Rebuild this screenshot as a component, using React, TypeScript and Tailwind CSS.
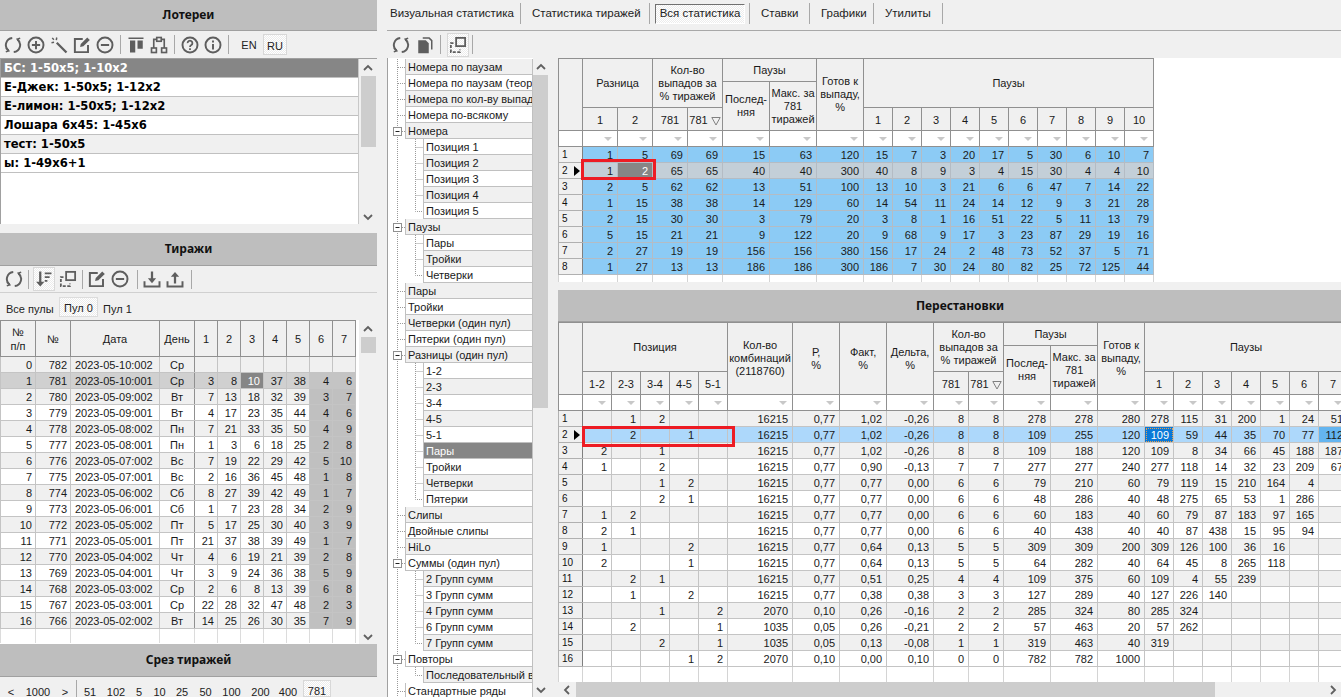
import React from "react";

const checker = "bg-[repeating-conic-gradient(#ffffff_0_25%,#ececec_0_50%)] bg-[length:2px_2px]";

const Ic = ({ children, size = 18 }: { children: React.ReactNode; size?: number }) => (
	<svg width={size} height={size} viewBox="0 0 24 24" fill="none" stroke="#5e5e5e" strokeWidth={2.6} className="shrink-0">
		{children}
	</svg>
);

const IconRefresh = () => (
	<Ic>
		<path d="M11 2.6A9.5 9.5 0 0 0 6 19.4" />
		<path d="M3 15.6L6.4 19.8L2.4 21" strokeWidth={2} />
		<path d="M13 21.4A9.5 9.5 0 0 0 18 4.6" />
		<path d="M21 8.4L17.6 4.2L21.6 3" strokeWidth={2} />
	</Ic>
);
const IconPlus = () => (
	<Ic>
		<circle cx="12" cy="12" r="10" />
		<path d="M6.5 12h11M12 6.5v11" />
	</Ic>
);
const IconMinus = () => (
	<Ic>
		<circle cx="12" cy="12" r="10" />
		<path d="M6.5 12h11" />
	</Ic>
);
const IconWand = () => (
	<Ic>
		<path d="M9 9L22 22" strokeWidth={3} />
		<path d="M3 2.5L5.2 5M9 2l-.6 3.4M2 9l3.4-.6" strokeWidth={2} />
	</Ic>
);
const IconEdit = () => (
	<Ic>
		<path d="M20 12v9.5H2.5V4H13" />
		<path d="M9.5 14.5l.8-4L19 2l3.4 3.4-8.6 8.4z" fill="#5e5e5e" stroke="none" />
	</Ic>
);
const IconColumns = () => (
	<Ic>
		<path d="M2 3h20" strokeWidth={2} />
		<path d="M4 6h7v16H4z" fill="#5e5e5e" stroke="none" />
		<path d="M14 6h7v11h-7z" fill="#5e5e5e" stroke="none" />
	</Ic>
);
const IconTree = () => (
	<Ic>
		<rect x="9" y="2" width="6" height="5" strokeWidth={2.2} />
		<rect x="2" y="16" width="6.5" height="6" strokeWidth={2.2} />
		<rect x="15.5" y="16" width="6.5" height="6" strokeWidth={2.2} />
		<path d="M9 4.5H5v11.5M15 4.5h4v11.5" strokeWidth={2.2} />
	</Ic>
);
const IconHelp = () => (
	<Ic>
		<circle cx="12" cy="12" r="10" />
		<path d="M8.8 9.5a3.2 3.2 0 1 1 5 2.6c-1.2.8-1.8 1.4-1.8 2.6" strokeWidth={2.4} />
		<path d="M12 16.4v2.4" strokeWidth={2.4} />
	</Ic>
);
const IconInfo = () => (
	<Ic>
		<circle cx="12" cy="12" r="10" />
		<path d="M12 10.5v7.5M12 6v2.6" />
	</Ic>
);
const IconCopyDoc = () => (
	<Ic>
		<path d="M9 1.5h9l4 4V18h-2V6.5L17 3.5H9z" fill="#5e5e5e" stroke="none" />
		<path d="M3 5.5h10l4 4V23H3z" fill="#5e5e5e" stroke="none" />
	</Ic>
);
const IconWindows = () => (
	<Ic>
		<rect x="9.5" y="2.5" width="12" height="11" strokeWidth={2.4} />
		<path d="M6 9.5H2.5v12h12V18" strokeWidth={2.4} strokeDasharray="4 2" />
	</Ic>
);
const IconSort = () => (
	<Ic>
		<path d="M7 2v16" strokeWidth={3} />
		<path d="M1.5 15.5L7 22l5.5-6.5z" fill="#5e5e5e" stroke="none" />
		<path d="M13 4.5h9M13 9.5h6.5M13 14.5h3.5" strokeWidth={2.6} />
	</Ic>
);
const IconDown = () => (
	<Ic>
		<path d="M2 15v7h20v-7" />
		<path d="M12 2v12" strokeWidth={3} />
		<path d="M6.5 11L12 17.5 17.5 11z" fill="#5e5e5e" stroke="none" />
	</Ic>
);
const IconUp = () => (
	<Ic>
		<path d="M2 15v7h20v-7" />
		<path d="M12 18V7" strokeWidth={3} />
		<path d="M6.5 9L12 2.5 17.5 9z" fill="#5e5e5e" stroke="none" />
	</Ic>
);

const Sep = ({ h = "h-[19px]" }: { h?: string }) => <div className={`w-px ${h} bg-[#a8a8a8] shrink-0`} />;

const Title = ({ text, h, extra = "" }: { text: string; h: string; extra?: string }) => (
	<div className={`${h} ${extra} shrink-0 bg-[#bebebe] border-b border-[#a0a0a0] flex items-center justify-center font-['Noto_Sans',sans-serif] font-bold text-[12px] text-[#111]`}>
		{text}
	</div>
);

const Chevron = ({ dir }: { dir: "up" | "down" | "left" | "right" }) => {
	const d = { up: "M1 7l4-4 4 4", down: "M1 3l4 4 4-4", left: "M7 1L3 5l4 4", right: "M3 1l4 4-4 4" }[dir];
	return (
		<svg width="10" height="10" viewBox="0 0 10 10" fill="none" stroke="#606060" strokeWidth={1.8} className="shrink-0">
			<path d={d} />
		</svg>
	);
};

const VScroll = ({ w, before, thumb }: { w: string; before: string; thumb: string }) => (
	<div className={`${w} shrink-0 h-full flex flex-col items-center bg-[#f0f0f0]`}>
		<div className={`${before} flex items-center justify-center shrink-0 w-full`}>
			<Chevron dir="up" />
		</div>
		<div className={`${thumb} shrink-0 w-[15px] bg-[#cdcdcd]`} />
		<div className="flex-1" />
		<div className="h-[15px] flex items-center justify-center shrink-0 w-full">
			<Chevron dir="down" />
		</div>
	</div>
);

const lotteries = [
	"БС: 1-50х5; 1-10х2",
	"Е-Джек: 1-50х5; 1-12х2",
	"Е-лимон: 1-50х5; 1-12х2",
	"Лошара 6х45: 1-45х6",
	"тест: 1-50х5",
	"ы: 1-49х6+1",
];

const LotteriesPanel = () => (
	<div className="flex flex-col h-[224px] shrink-0">
		<Title text="Лотереи" h="h-[31px]" />
		<div className="h-[27px] shrink-0 flex items-center pl-[4px] gap-[5px]">
			<IconRefresh />
			<IconPlus />
			<IconWand />
			<IconEdit />
			<IconMinus />
			<div className="mx-[1px]"><Sep /></div>
			<IconColumns />
			<IconTree />
			<div className="mx-[1px]"><Sep /></div>
			<IconHelp />
			<IconInfo />
			<div className="mx-[1px]"><Sep /></div>
			<span className="w-[28px] pt-[2px] text-center text-[11px] text-[#222]">EN</span>
			<span className={`w-[24px] h-[21px] pt-[3px] -ml-[5px] border border-[#d8d8d8] flex items-center justify-center text-[11px] text-[#222] ${checker}`}>RU</span>
		</div>
		<div className="flex-1 flex min-h-0 bg-white border-t border-l border-[#a0a0a0]">
			<div className="flex-1 min-w-0 border-r border-[#c8c8c8]">
				{lotteries.map((l, i) => (
					<div
						key={l}
						className={`h-[19px] flex items-center pl-[3px] pt-[1px] font-['DejaVu_Sans',sans-serif] font-bold text-[11.6px] whitespace-nowrap border-b border-[#c0c0c0] ${
							i === 0 ? "bg-[#868686] text-white" : i % 2 === 0 ? "bg-[#f0f0f0] text-black" : "bg-white text-black"
						}`}
					>
						{l}
					</div>
				))}
			</div>
			<VScroll w="w-[18px]" before="h-[17px]" thumb="h-[71px]" />
		</div>
	</div>
);

const drawWidths = [35, 35, 89, 35, 23, 23, 23, 23, 23, 23, 23];
const draws: (string | number)[][] = [
	[0, 782, "2023-05-10:002", "Ср"],
	[1, 781, "2023-05-10:001", "Ср", 3, 8, 10, 37, 38, 4, 6],
	[2, 780, "2023-05-09:002", "Вт", 7, 13, 18, 32, 39, 3, 7],
	[3, 779, "2023-05-09:001", "Вт", 4, 17, 23, 35, 44, 4, 6],
	[4, 778, "2023-05-08:002", "Пн", 7, 21, 33, 35, 50, 4, 9],
	[5, 777, "2023-05-08:001", "Пн", 1, 3, 6, 18, 25, 2, 8],
	[6, 776, "2023-05-07:002", "Вс", 7, 19, 22, 29, 42, 5, 10],
	[7, 775, "2023-05-07:001", "Вс", 2, 16, 36, 45, 48, 1, 8],
	[8, 774, "2023-05-06:002", "Сб", 8, 27, 39, 42, 49, 1, 7],
	[9, 773, "2023-05-06:001", "Сб", 1, 7, 23, 28, 34, 2, 9],
	[10, 772, "2023-05-05:002", "Пт", 5, 17, 25, 30, 40, 3, 9],
	[11, 771, "2023-05-05:001", "Пт", 21, 37, 38, 39, 49, 1, 7],
	[12, 770, "2023-05-04:002", "Чт", 4, 6, 19, 21, 39, 2, 8],
	[13, 769, "2023-05-04:001", "Чт", 3, 9, 24, 36, 38, 5, 9],
	[14, 768, "2023-05-03:002", "Ср", 2, 6, 8, 13, 39, 6, 8],
	[15, 767, "2023-05-03:001", "Ср", 22, 28, 32, 47, 48, 2, 3],
	[16, 766, "2023-05-02:002", "Вт", 14, 25, 26, 30, 35, 7, 9],
];
const drawHeads = ["№ п/п", "№", "Дата", "День", "1", "2", "3", "4", "5", "6", "7"];

const Cols = ({ widths }: { widths: number[] }) => (
	<colgroup>
		{widths.map((w, i) => (
			<col key={i} style={{ width: w }} />
		))}
	</colgroup>
);

const DrawsPanel = () => (
	<div className="flex flex-col flex-1 min-h-0">
		<Title text="Тиражи" h="h-[33px]" />
		<div className="h-[27px] shrink-0 flex items-center pl-[5px] gap-[5px] border-b border-[#d0d0d0]">
			<IconRefresh />
			<Sep />
			<div className={`w-[22px] h-[24px] flex items-center justify-center -mx-[1px] border border-[#d8d8d8] ${checker}`}>
				<IconSort />
			</div>
			<IconWindows />
			<Sep />
			<IconEdit />
			<IconMinus />
			<div className="ml-[3px]"><Sep /></div>
			<IconDown />
			<IconUp />
			<div className="ml-[2px]"><Sep /></div>
		</div>
		<div className="h-[27px] shrink-0 flex items-start pt-[4px] text-[11px] leading-[20px] text-[#222]">
			<span className="pl-[6px] w-[59px] whitespace-nowrap pt-[2px]">Все пулы</span>
			<span className={`w-[39px] h-[20px] pt-[2px] border border-[#dcdcdc] flex items-center justify-center ${checker}`}>Пул 0</span>
			<span className="pl-[5px] pt-[2px]">Пул 1</span>
		</div>
		<div className="h-[324px] shrink-0 flex bg-white overflow-hidden">
			<div className="w-[358px] shrink-0 overflow-hidden">
				<table className="table-fixed border-collapse w-[355px] text-[11px] text-[#1a1a1a]">
					<Cols widths={drawWidths} />
					<thead>
						<tr>
							{drawHeads.map((h) => (
								<th key={h} className="h-[36px] p-0 font-normal bg-[#f0f0f0] border border-[#909090] leading-[14px] text-center">
									{h === "№ п/п" ? (
										<>
											№<br />п/п
										</>
									) : (
										h
									)}
								</th>
							))}
						</tr>
					</thead>
					<tbody>
						{draws.map((r, i) => {
							const base = i === 1 ? "bg-[#d0d0d0]" : i % 2 === 0 ? "bg-[#f0f0f0]" : "bg-white";
							return (
								<tr key={i}>
									{drawHeads.map((_, c) => {
										const v = r[c];
										let cls = base;
										if (c >= 9 && i > 0) cls = i === 1 ? "bg-[#c4c4c4]" : "bg-[#c0c0c0]";
										if (i === 1 && c === 6) cls = "bg-[#868686] text-white";
										const align = c === 2 ? "text-left pl-1" : c === 3 ? "text-center" : "text-right pr-[3px]";
										const edge = c === 3 ? "border-r-[#909090]" : "";
										return (
											<td key={c} className={`h-4 p-0 pt-[1px] leading-[14px] border border-[#c4c4c4] whitespace-nowrap ${align} ${cls} ${edge}`}>
												{v}
											</td>
										);
									})}
								</tr>
							);
						})}
						<tr>
							{drawHeads.map((h) => (
								<td key={h} className="h-[14px] p-0 border-x border-[#dcdcdc]" />
							))}
						</tr>
					</tbody>
				</table>
			</div>
			<div className="w-px bg-white" />
			<VScroll w="flex-1" before="h-[17px]" thumb="h-[16px]" />
		</div>
		<Title text="Срез тиражей" h="h-[33px]" />
		<div className="flex-1 flex items-start pt-[10px] leading-[10px] text-[11px] text-[#222] min-h-0">
			<span className="w-[22px] text-center">&lt;</span>
			<span className="w-[32px] text-center">1000</span>
			<span className="w-[22px] text-center">&gt;</span>
			<div className="-mt-[7px]"><Sep h="h-[17px]" /></div>
			{[
				["51", "w-[26px]"],
				["102", "w-[26px]"],
				["5", "w-[20px]"],
				["10", "w-[21px]"],
				["25", "w-[24px]"],
				["50", "w-[23px]"],
				["100", "w-[29px]"],
				["200", "w-[29px]"],
				["400", "w-[26px]"],
			].map(([t, w]) => (
				<span key={t} className={`${w} text-center`}>
					{t}
				</span>
			))}
			<span className={`w-[28px] h-[17px] -mt-[7px] ml-[2px] pt-[4px] border border-[#d8d8d8] flex items-center justify-center ${checker}`}>781</span>
		</div>
	</div>
);

type TreeRow = { t: string; lvl: 0 | 1; box?: boolean; last?: boolean; sel?: boolean };
const treeRows: TreeRow[] = [
	{ t: "Номера по паузам", lvl: 0 },
	{ t: "Номера по паузам (теоретические)", lvl: 0 },
	{ t: "Номера по кол-ву выпадений", lvl: 0 },
	{ t: "Номера по-всякому", lvl: 0 },
	{ t: "Номера", lvl: 0, box: true },
	{ t: "Позиция 1", lvl: 1 },
	{ t: "Позиция 2", lvl: 1 },
	{ t: "Позиция 3", lvl: 1 },
	{ t: "Позиция 4", lvl: 1 },
	{ t: "Позиция 5", lvl: 1, last: true },
	{ t: "Паузы", lvl: 0, box: true },
	{ t: "Пары", lvl: 1 },
	{ t: "Тройки", lvl: 1 },
	{ t: "Четверки", lvl: 1, last: true },
	{ t: "Пары", lvl: 0 },
	{ t: "Тройки", lvl: 0 },
	{ t: "Четверки (один пул)", lvl: 0 },
	{ t: "Пятерки (один пул)", lvl: 0 },
	{ t: "Разницы (один пул)", lvl: 0, box: true },
	{ t: "1-2", lvl: 1 },
	{ t: "2-3", lvl: 1 },
	{ t: "3-4", lvl: 1 },
	{ t: "4-5", lvl: 1 },
	{ t: "5-1", lvl: 1 },
	{ t: "Пары", lvl: 1, sel: true },
	{ t: "Тройки", lvl: 1 },
	{ t: "Четверки", lvl: 1 },
	{ t: "Пятерки", lvl: 1, last: true },
	{ t: "Слипы", lvl: 0 },
	{ t: "Двойные слипы", lvl: 0 },
	{ t: "HiLo", lvl: 0 },
	{ t: "Суммы (один пул)", lvl: 0, box: true },
	{ t: "2 Групп сумм", lvl: 1 },
	{ t: "3 Групп сумм", lvl: 1 },
	{ t: "4 Групп сумм", lvl: 1 },
	{ t: "6 Групп сумм", lvl: 1 },
	{ t: "7 Групп сумм", lvl: 1, last: true },
	{ t: "Повторы", lvl: 0, box: true },
	{ t: "Последовательный вариант", lvl: 1, last: true },
	{ t: "Стандартные ряды", lvl: 0 },
];

const Connector = ({ r }: { r: TreeRow }) => {
	const w = r.lvl === 0 ? 17 : 35;
	return (
		<svg width={w} height="16" className="shrink-0" stroke="#9a9a9a" strokeDasharray="1 1" fill="none">
			<path d="M9.5 0V16" />
			{r.lvl === 1 && <path d={r.last ? "M27.5 0V8.5H35" : "M27.5 0V16M27.5 8.5H35"} />}
			{r.lvl === 0 && !r.box && <path d="M10 8.5H17" />}
			{r.box && (
				<g strokeDasharray="none">
					<rect x="5.5" y="4.5" width="8" height="8" fill="#fff" stroke="#909090" />
					<path d="M7.5 8.5H11.5" stroke="#222" />
					<path d="M14 8.5H17" strokeDasharray="1 1" />
				</g>
			)}
		</svg>
	);
};

const Tree = () => (
	<div className="w-[161px] shrink-0 h-full flex bg-white border-l border-[#a0a0a0] overflow-hidden">
		<div className="w-[145px] shrink-0 pt-[1px] overflow-hidden">
			{treeRows.map((r, i) => (
				<div key={i} className="h-4 flex">
					<Connector r={r} />
					<div
						className={`flex-1 min-w-0 pl-[2px] pt-[1px] leading-[14px] text-[11px] whitespace-nowrap overflow-hidden border border-l-[#c0c0c0] border-[#c0c0c0] border-t-0 ${
							r.sel ? "bg-[#868686] text-white" : i % 2 === 0 ? "bg-[#f0f0f0] text-[#1a1a1a]" : "bg-white text-[#1a1a1a]"
						}`}
					>
						{r.t}
					</div>
				</div>
			))}
		</div>
		<VScroll w="flex-1" before="h-[17px]" thumb="h-[333px]" />
	</div>
);

const Filter = () => (
	<svg width="8" height="4" viewBox="0 0 8 4" className="inline-block mr-[5px] mb-[1px]">
		<path d="M0 0h8L4 4z" fill="#c8c8c8" />
	</svg>
);

const SortMark = () => (
	<svg width="10" height="9" viewBox="0 0 10 9" className="inline-block" fill="none" stroke="#808080">
		<path d="M.8.5h8.4L5 8z" />
	</svg>
);

const th = "p-0 font-normal bg-[#f0f0f0] border border-[#909090] text-center leading-[13px] text-[#1a1a1a] overflow-hidden";
const sub = "p-0 pt-[3px] font-normal bg-[#f0f0f0] border border-[#909090] text-center leading-[13px] text-[#1a1a1a] overflow-hidden";

const Kolvo = () => (
	<>
		Кол-во
		<br />
		выпадов за
		<br />% тиражей
	</>
);
const Posl = () => (
	<>
		Послед-
		<br />
		няя
	</>
);
const Maks = () => (
	<>
		Макс. за
		<br />
		781
		<br />
		тиражей
	</>
);
const Gotov = () => (
	<>
		Готов к
		<br />
		выпаду,
		<br />%
	</>
);

const Marker = () => (
	<svg width="6" height="10" viewBox="0 0 6 10" className="absolute right-[2px] top-[3px]">
		<path d="M0 0l6 5-6 5z" fill="#000" />
	</svg>
);

const RowHead = ({ n, cur }: { n: number; cur: boolean }) => (
	<td className="relative h-4 p-0 pl-[3px] bg-[#f0f0f0] border border-[#b0b0b0] border-r-[#808080] text-[10px] leading-[15px] text-[#111]">
		{n}
		{cur && <Marker />}
	</td>
);

const FilterRow = ({ n }: { n: number }) => (
	<tr>
		{Array.from({ length: n }).map((_, i) => (
			<td key={i} className="h-4 p-0 bg-white border border-[#909090] border-t-[#909090] text-right leading-[13px]">
				{i > 0 && <Filter />}
			</td>
		))}
	</tr>
);

const Stub = ({ n, h }: { n: number; h: string }) => (
	<tr>
		{Array.from({ length: n }).map((_, i) => (
			<td key={i} className={`${h} p-0 bg-white border-x border-[#d4d4d4]`} />
		))}
	</tr>
);

const statRows: number[][] = [
	[1, 5, 69, 69, 15, 63, 120, 15, 7, 3, 20, 17, 5, 30, 6, 10, 7],
	[1, 2, 65, 65, 40, 40, 300, 40, 8, 9, 3, 4, 15, 30, 4, 4, 10],
	[2, 5, 62, 62, 13, 51, 100, 13, 10, 3, 21, 6, 6, 47, 7, 14, 22],
	[1, 15, 38, 38, 14, 129, 60, 14, 54, 11, 24, 14, 12, 9, 3, 21, 28],
	[2, 15, 30, 30, 3, 79, 20, 3, 8, 1, 16, 51, 22, 5, 11, 13, 79],
	[5, 15, 21, 21, 9, 122, 20, 9, 68, 9, 17, 3, 23, 87, 29, 19, 16],
	[2, 27, 19, 19, 156, 156, 380, 156, 17, 24, 2, 48, 73, 52, 37, 5, 71],
	[1, 27, 13, 13, 186, 186, 300, 186, 7, 30, 24, 80, 82, 25, 72, 125, 44],
];
const statWidths = [24, 35, 35, 35, 35, 47, 47, 47, 29, 29, 29, 29, 29, 29, 29, 29, 29, 29];
const tens = ["1", "2", "3", "4", "5", "6", "7", "8", "9", "10"];

const StatGrid = () => (
	<div className="h-[224px] shrink-0 bg-white relative overflow-hidden">
		<table className="table-fixed border-collapse w-[596px] text-[11px] text-[#1a1a1a]">
			<Cols widths={statWidths} />
			<thead>
				<tr>
					<th rowSpan={3} className={th} />
					<th colSpan={2} rowSpan={2} className={th}>Разница</th>
					<th colSpan={2} rowSpan={2} className={th}><Kolvo /></th>
					<th colSpan={2} className={`${th} h-[23px]`}>Паузы</th>
					<th rowSpan={3} className={th}><Gotov /></th>
					<th colSpan={10} rowSpan={2} className={th}>Паузы</th>
				</tr>
				<tr>
					<th rowSpan={2} className={th}><Posl /></th>
					<th rowSpan={2} className={th}><Maks /></th>
					<th className="h-[26px] p-0" />
				</tr>
				<tr>
					<th className={`${sub} h-[23px]`}>1</th>
					<th className={sub}>2</th>
					<th className={sub}>781</th>
					<th className={sub}>781 <SortMark /></th>
					{tens.map((t) => (
						<th key={t} className={sub}>{t}</th>
					))}
				</tr>
			</thead>
			<tbody>
				<FilterRow n={18} />
				{statRows.map((r, i) => (
					<tr key={i}>
						<RowHead n={i + 1} cur={i === 1} />
						{r.map((v, c) => (
							<td
								key={c}
								className={`h-4 p-0 pr-1 pt-[1px] text-right leading-[14px] border border-[#b4bcc4] ${
									i === 1 ? (c === 1 ? "bg-[#868686] text-white" : "bg-[#c3cfd8]") : "bg-[#8ccbf5]"
								}`}
							>
								{v}
							</td>
						))}
					</tr>
				))}
				<Stub n={18} h="h-[7px]" />
			</tbody>
		</table>
		<div className="absolute left-[23px] top-[101px] w-[75px] h-[21px] border-[3px] border-[#ed1c24]" />
	</div>
);

type PermRow = (string | number)[];
const permPos: number[][] = [
	[0, 1, 2, 0, 0],
	[0, 2, 0, 1, 0],
	[2, 0, 1, 0, 0],
	[1, 0, 2, 0, 0],
	[0, 0, 1, 2, 0],
	[0, 0, 2, 1, 0],
	[1, 2, 0, 0, 0],
	[2, 1, 0, 0, 0],
	[1, 0, 0, 2, 0],
	[2, 0, 0, 1, 0],
	[0, 2, 1, 0, 0],
	[0, 1, 0, 2, 0],
	[0, 0, 1, 0, 2],
	[0, 2, 0, 0, 1],
	[0, 0, 2, 0, 1],
	[0, 0, 0, 1, 2],
];
const permRows: PermRow[] = [
	[16215, "0,77", "1,02", "-0,26", 8, 8, 278, 278, 280, 278, 115, 31, 200, 1, 24, 51],
	[16215, "0,77", "1,02", "-0,26", 8, 8, 109, 255, 120, 109, 59, 44, 35, 70, 77, 112],
	[16215, "0,77", "1,02", "-0,26", 8, 8, 109, 188, 120, 109, 8, 34, 66, 45, 188, 187],
	[16215, "0,77", "0,90", "-0,13", 7, 7, 277, 277, 240, 277, 118, 14, 32, 23, 209, 67],
	[16215, "0,77", "0,77", "0,00", 6, 6, 79, 210, 60, 79, 119, 15, 210, 164, 4],
	[16215, "0,77", "0,77", "0,00", 6, 6, 48, 286, 40, 48, 275, 65, 53, 1, 286],
	[16215, "0,77", "0,77", "0,00", 6, 6, 60, 183, 40, 60, 79, 87, 183, 97, 165],
	[16215, "0,77", "0,77", "0,00", 6, 6, 40, 438, 40, 40, 87, 438, 15, 95, 94],
	[16215, "0,77", "0,64", "0,13", 5, 5, 309, 309, 200, 309, 126, 100, 36, 16],
	[16215, "0,77", "0,64", "0,13", 5, 5, 64, 282, 40, 64, 45, 8, 265, 118],
	[16215, "0,77", "0,51", "0,25", 4, 4, 109, 375, 60, 109, 4, 55, 239],
	[16215, "0,77", "0,38", "0,38", 3, 3, 127, 289, 40, 127, 226, 140],
	[2070, "0,10", "0,26", "-0,16", 2, 2, 285, 324, 80, 285, 324],
	[1035, "0,05", "0,26", "-0,21", 2, 2, 57, 463, 20, 57, 262],
	[1035, "0,05", "0,13", "-0,08", 1, 1, 319, 463, 40, 319],
	[2070, "0,10", "0,00", "0,10", 0, 0, 782, 782, 1000],
];
const permWidths = [24, 29, 29, 29, 29, 29, 65, 47, 47, 47, 35, 35, 47, 47, 47, 29, 29, 29, 29, 29, 29, 29];
const sevens = ["1", "2", "3", "4", "5", "6", "7"];
const PERM_COLS = permWidths.length;

const PermGrid = () => (
	<div className="flex-1 min-h-0 bg-white relative overflow-hidden">
		<table className="table-fixed border-collapse w-[790px] text-[11px] text-[#1a1a1a]">
			<Cols widths={permWidths} />
			<thead>
				<tr>
					<th rowSpan={3} className={th} />
					<th colSpan={5} rowSpan={2} className={th}>Позиция</th>
					<th rowSpan={3} className={th}>
						Кол-во
						<br />
						комбинаций
						<br />
						(2118760)
					</th>
					<th rowSpan={3} className={th}>
						Р,
						<br />%
					</th>
					<th rowSpan={3} className={th}>
						Факт,
						<br />%
					</th>
					<th rowSpan={3} className={th}>
						Дельта,
						<br />%
					</th>
					<th colSpan={2} rowSpan={2} className={th}><Kolvo /></th>
					<th colSpan={2} className={`${th} h-[23px]`}>Паузы</th>
					<th rowSpan={3} className={th}><Gotov /></th>
					<th colSpan={7} rowSpan={2} className={th}>Паузы</th>
				</tr>
				<tr>
					<th rowSpan={2} className={th}><Posl /></th>
					<th rowSpan={2} className={th}><Maks /></th>
					<th className="h-[26px] p-0" />
				</tr>
				<tr>
					{["1-2", "2-3", "3-4", "4-5", "5-1"].map((t, i) => (
						<th key={t} className={`${sub} ${i === 0 ? "h-[23px]" : ""}`}>{t}</th>
					))}
					<th className={sub}>781</th>
					<th className={sub}>781 <SortMark /></th>
					{sevens.map((t) => (
						<th key={t} className={sub}>{t}</th>
					))}
				</tr>
			</thead>
			<tbody>
				<FilterRow n={PERM_COLS} />
				{permRows.map((r, i) => {
					const base = i === 1 ? "bg-[#add8fb]" : i % 2 === 0 ? "bg-[#f0f0f0]" : "bg-white";
					const vals: (string | number | undefined)[] = [...permPos[i].map((p) => p || undefined), ...r];
					return (
						<tr key={i}>
							<RowHead n={i + 1} cur={i === 1} />
							{permWidths.slice(1).map((_, c) => {
								let cls = base;
								if (i === 1 && c === 14) cls = "bg-[#0a78d7] text-white outline-1 -outline-offset-2 outline-dotted outline-[#e8a04c]";
								if (i === 1 && c === 20) cls = "bg-[#64b5f0]";
								return (
									<td key={c} className={`h-4 p-0 pr-1 pt-[1px] text-right leading-[14px] whitespace-nowrap border border-[#c4c4c4] ${cls}`}>
										{vals[c]}
									</td>
								);
							})}
						</tr>
					);
				})}
				<Stub n={PERM_COLS} h="h-[15px]" />
			</tbody>
		</table>
		<div className="absolute left-[24px] top-[104px] w-[153px] h-[21px] border-[3px] border-[#ed1c24]" />
	</div>
);

const HScroll = () => (
	<div className="h-[15px] shrink-0 flex items-center bg-[#f0f0f0]">
		<div className="w-[18px] shrink-0 flex justify-center">
			<Chevron dir="left" />
		</div>
		<div className="w-[639px] h-full shrink-0 bg-[#cdcdcd]" />
		<div className="flex-1" />
		<div className="w-[16px] shrink-0 flex justify-center">
			<Chevron dir="right" />
		</div>
	</div>
);

const tabs = [
	{ t: "Визуальная статистика", w: "w-[134px]" },
	{ t: "Статистика тиражей", w: "w-[129px]" },
	{ t: "Вся статистика", w: "w-[100px]", on: true },
	{ t: "Ставки", w: "w-[60px]" },
	{ t: "Графики", w: "w-[64px]" },
	{ t: "Утилиты", w: "w-[69px]" },
];

const TabBar = () => (
	<div className="h-[31px] shrink-0 flex items-start pt-[3px] border-b border-[#a8a8a8] text-[11.5px] text-[#222]">
		{tabs.map((x) => (
			<div key={x.t} className={`${x.w} h-[21px] flex items-center justify-between whitespace-nowrap border-r border-[#a8a8a8]`}>
				{x.on ? (
					<span className={`ml-[5px] mr-[4px] flex-1 h-[20px] border border-white border-t-[#707070] border-l-[#707070] flex items-center justify-center ${checker}`}>
						{x.t}
					</span>
				) : (
					<span className={x.t === "Визуальная статистика" ? "pl-[3px]" : "pl-[11px]"}>{x.t}</span>
				)}
			</div>
		))}
	</div>
);

export default function App() {
	return (
		<div className="w-[1341px] h-[697px] overflow-hidden flex bg-[#f0f0f0] font-['Liberation_Sans',sans-serif]">
			<div className="w-[377px] shrink-0 h-full flex flex-col">
				<LotteriesPanel />
				<div className="h-[9px] shrink-0" />
				<DrawsPanel />
			</div>
			<div className="w-[10px] shrink-0" />
			<div className="flex-1 min-w-0 h-full flex flex-col">
				<TabBar />
				<div className="h-[27px] shrink-0 flex items-center pl-[5px] gap-[6px]">
					<IconRefresh />
					<IconCopyDoc />
					<Sep />
					<div className={`w-[22px] h-[24px] flex items-center justify-center border border-[#d8d8d8] ${checker}`}>
						<IconWindows />
					</div>
					<div className="-ml-[3px]"><Sep /></div>
				</div>
				<div className="flex-1 min-h-0 flex">
					<Tree />
					<div className="w-[10px] shrink-0" />
					<div className="flex-1 min-w-0 flex flex-col">
						<StatGrid />
						<div className="h-2 shrink-0" />
						<Title text="Перестановки" h="h-[32px]" extra="pl-[21px]" />
						<PermGrid />
						<HScroll />
					</div>
				</div>
			</div>
		</div>
	);
}
